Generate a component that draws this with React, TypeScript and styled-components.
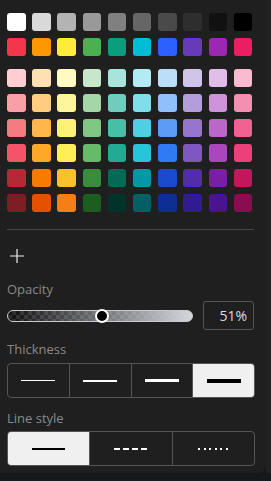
import styled, { createGlobalStyle } from 'styled-components'

const GlobalStyle = createGlobalStyle`
  html, body {
    margin: 0;
    padding: 0;
    background: #16181d;
    font-family: 'Open Sans', 'Noto Sans', sans-serif;
  }
`

const Frame = styled.div`
  display: flex;
  width: 271px;
  height: 473px;
`

const Panel = styled.div`
  width: 266px;
  height: 473px;
  box-sizing: border-box;
  padding: 13px 0 0 7px;
  background: #1f1f1f;
  border-bottom-right-radius: 8px;
  display: flex;
  flex-direction: column;
`

const Rail = styled.div`
  width: 5px;
  background: #222222;
`

const Swatches = styled.div<{ $top: number }>`
  display: grid;
  grid-template-columns: repeat(10, 18.5px);
  grid-auto-rows: 18px;
  column-gap: 6.7px;
  row-gap: 7px;
  margin-top: ${(p) => p.$top}px;
`

const Swatch = styled.div<{ $c: string }>`
  background: ${(p) => p.$c};
  border-radius: 3px;
`

const Divider = styled.div`
  width: 247px;
  height: 1px;
  background: #474747;
  margin-top: 17px;
`

const AddButton = styled.div`
  width: 14px;
  height: 14px;
  margin: 19px 0 0 3px;
  color: #eeeeee;
  display: flex;
`

const Label = styled.div<{ $top: number }>`
  font-size: 13px;
  line-height: 18px;
  color: #8a8a8a;
  margin-top: ${(p) => p.$top}px;
`

const SliderRow = styled.div`
  display: flex;
  align-items: center;
  width: 247px;
  margin-top: 3px;
`

const Track = styled.div`
  position: relative;
  width: 186px;
  height: 12px;
  box-sizing: border-box;
  border: 1px solid #c9cad0;
  border-radius: 6px;
  background-image: linear-gradient(90deg, rgba(212, 214, 220, 0), rgba(212, 214, 220, 1)),
    repeating-conic-gradient(#2a2a2a 0 25%, #0e0e0e 0 50%);
  background-size: 100% 100%, 8px 8px;
`

const Thumb = styled.div`
  position: absolute;
  top: 50%;
  width: 14px;
  height: 14px;
  box-sizing: border-box;
  border: 2px solid #ffffff;
  border-radius: 50%;
  background: #000000;
  transform: translate(-50%, -50%);
`

const ValueBox = styled.div`
  margin-left: auto;
  width: 51px;
  height: 29px;
  box-sizing: border-box;
  border: 1px solid #555555;
  border-radius: 3px;
  padding-right: 6px;
  display: flex;
  align-items: center;
  justify-content: flex-end;
  font-size: 14px;
  color: #dddddd;
`

const Segments = styled.div<{ $top: number }>`
  display: flex;
  width: 248px;
  height: 35px;
  box-sizing: border-box;
  border: 1px solid #555555;
  border-radius: 4px;
  overflow: hidden;
  margin-top: ${(p) => p.$top}px;
`

const Segment = styled.div<{ $on?: boolean }>`
  flex: 1;
  display: flex;
  align-items: center;
  justify-content: center;
  background: ${(p) => (p.$on ? '#f0f0f0' : 'transparent')};
  & + & {
    border-left: 1px solid #555555;
  }
`

const Stroke = styled.div<{ $w: number; $on?: boolean }>`
  width: 34px;
  height: ${(p) => p.$w}px;
  background: ${(p) => (p.$on ? '#000000' : '#ffffff')};
`

// dash pattern: [width, dash, gap]
const patterns: Record<string, [number, number, number]> = {
  solid: [33, 33, 0],
  dashed: [33, 6, 3],
  dotted: [30, 2, 3.6],
}

const PatternStroke = styled.div<{ $kind: string; $on?: boolean }>`
  width: ${(p) => patterns[p.$kind][0]}px;
  height: 2px;
  background: repeating-linear-gradient(
    90deg,
    ${(p) => (p.$on ? '#000000' : '#ffffff')} 0 ${(p) => patterns[p.$kind][1]}px,
    transparent ${(p) => patterns[p.$kind][1]}px
      ${(p) => patterns[p.$kind][1] + patterns[p.$kind][2]}px
  );
`

const grays = ['#ffffff', '#d9d9d9', '#b3b3b3', '#999999', '#808080', '#666666', '#4a4a4a', '#2e2e2e', '#111111', '#000000']
const brights = ['#f3364b', '#ff9800', '#ffeb3b', '#4caf50', '#0a9e7f', '#00bcd4', '#2c60ff', '#673ab7', '#9c27b0', '#e91e63']
const shades = [
  ['#ffcdd2', '#ffe0b2', '#fff9c4', '#c8e6c9', '#a8e4dc', '#b2ebf2', '#bbdefb', '#d1c4e9', '#e1bee7', '#f8bbd0'],
  ['#f7a1a6', '#ffcc80', '#fff59d', '#a5d6a7', '#70cdbd', '#80deea', '#90c0fb', '#b39ddb', '#ce93d8', '#f48fb1'],
  ['#f47b7f', '#ffb74d', '#fff176', '#81c784', '#46bfa7', '#4dd0e1', '#5c9cf5', '#9575cd', '#ba68c8', '#f06292'],
  ['#f5536a', '#ffa726', '#ffee58', '#66bb6a', '#22aa94', '#26c6da', '#2f7af5', '#7e57c2', '#ab47bc', '#ec407a'],
  ['#b22a36', '#f57c00', '#fbc02d', '#388e3c', '#046a55', '#0097a7', '#1a4bcd', '#512da8', '#7b1fa2', '#c2185b'],
  ['#7f1d24', '#e65100', '#f57f17', '#1b5e20', '#003329', '#006064', '#0d2f94', '#311b92', '#4a148c', '#880e4f'],
]

const opacity = 51

export default function App() {
  return (
    <>
      <GlobalStyle />
      <Frame>
        <Panel>
          <Swatches $top={0}>
            {[...grays, ...brights].map((c, i) => (
              <Swatch key={i} $c={c} />
            ))}
          </Swatches>
          <Swatches $top={13}>
            {shades.flat().map((c, i) => (
              <Swatch key={i} $c={c} />
            ))}
          </Swatches>
          <Divider />
          <AddButton>
            <svg width="14" height="14" viewBox="0 0 14 14">
              <path d="M7 0v14M0 7h14" stroke="currentColor" strokeWidth="1.2" />
            </svg>
          </AddButton>
          <Label $top={17}>Opacity</Label>
          <SliderRow>
            <Track>
              <Thumb style={{ left: `${opacity}%` }} />
            </Track>
            <ValueBox>{opacity}%</ValueBox>
          </SliderRow>
          <Label $top={10}>Thickness</Label>
          <Segments $top={5}>
            {[1, 2, 3, 4].map((w) => (
              <Segment key={w} $on={w === 4}>
                <Stroke $w={w} $on={w === 4} />
              </Segment>
            ))}
          </Segments>
          <Label $top={11}>Line style</Label>
          <Segments $top={4}>
            {['solid', 'dashed', 'dotted'].map((k) => (
              <Segment key={k} $on={k === 'solid'}>
                <PatternStroke $kind={k} $on={k === 'solid'} />
              </Segment>
            ))}
          </Segments>
        </Panel>
        <Rail />
      </Frame>
    </>
  )
}
